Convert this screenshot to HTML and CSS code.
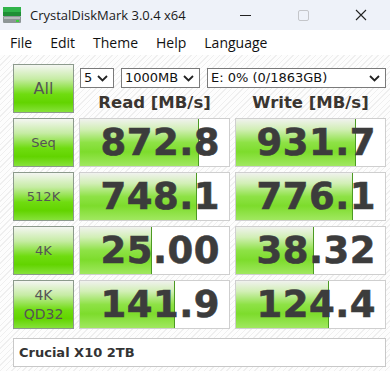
FILE: index.html
```html
<!DOCTYPE html>
<html lang="en">
<head>
    <meta charset="UTF-8">
    <meta name="viewport" content="width=device-width, initial-scale=1.0">
    <title>CrystalDiskMark 3.0.4 x64</title>
    <link rel="stylesheet" href="styles.css">
</head>
<body>
    <div class="window">
        <div class="titlebar">
            <svg class="app-icon" width="20" height="20" viewBox="0 0 20 20">
                <rect x="1" y="2" width="18" height="5" fill="#2fb34a"/>
                <rect x="1" y="7" width="18" height="4" fill="#1e8f35"/>
                <rect x="1" y="11" width="18" height="7" rx="1" fill="#8d9696"/>
                <rect x="2" y="12" width="16" height="2" fill="#b4bcbc"/>
                <rect x="14" y="15" width="3" height="2" fill="#39d13a"/>
            </svg>
            <span class="title">CrystalDiskMark 3.0.4 x64</span>
            <div class="controls">
                <span class="ctl ctl-min"></span>
                <span class="ctl ctl-max"></span>
                <span class="ctl ctl-close">
                    <svg width="12" height="12" viewBox="0 0 12 12"><path d="M1 1L11 11M11 1L1 11" stroke="#222" stroke-width="1.1"/></svg>
                </span>
            </div>
        </div>

        <div class="menubar">
            <span>File</span>
            <span>Edit</span>
            <span>Theme</span>
            <span>Help</span>
            <span>Language</span>
        </div>

        <div class="main">
            <div class="bench">
                <div class="btn btn-all">All</div>
                <div class="top">
                    <div class="selects">
                        <div class="select sel-count">5<svg class="chev" width="11" height="7" viewBox="0 0 11 7"><path d="M1 1L5.5 5.5L10 1" fill="none" stroke="#222" stroke-width="1.8"/></svg></div>
                        <div class="select sel-size">1000MB<svg class="chev" width="11" height="7" viewBox="0 0 11 7"><path d="M1 1L5.5 5.5L10 1" fill="none" stroke="#222" stroke-width="1.8"/></svg></div>
                        <div class="select sel-drive">E: 0% (0/1863GB)<svg class="chev" width="11" height="7" viewBox="0 0 11 7"><path d="M1 1L5.5 5.5L10 1" fill="none" stroke="#222" stroke-width="1.8"/></svg></div>
                    </div>
                    <div class="heads">
                        <div class="head">Read [MB/s]</div>
                        <div class="head">Write [MB/s]</div>
                    </div>
                </div>

                <div class="btn">Seq</div>
                <div class="cell"><div class="bar" style="width: 118px"></div><span class="val">872.8</span></div>
                <div class="cell"><div class="bar" style="width: 119px"></div><span class="val">931.7</span></div>

                <div class="btn">512K</div>
                <div class="cell"><div class="bar" style="width: 116px"></div><span class="val">748.1</span></div>
                <div class="cell"><div class="bar" style="width: 116px"></div><span class="val">776.1</span></div>

                <div class="btn">4K</div>
                <div class="cell"><div class="bar" style="width: 71px"></div><span class="val">25.00</span></div>
                <div class="cell"><div class="bar" style="width: 77px"></div><span class="val">38.32</span></div>

                <div class="btn btn-two">4K<br>QD32</div>
                <div class="cell"><div class="bar" style="width: 94px"></div><span class="val">141.9</span></div>
                <div class="cell"><div class="bar" style="width: 92px"></div><span class="val">124.4</span></div>
            </div>

            <div class="comment">Crucial X10 2TB</div>
        </div>
    </div>
</body>
</html>
```

FILE: styles.css
```css
:root {
    --text: #3c3c3c;
    --label: #555555;
    --cell-border: #cfcfcf;
    --btn-border: #8c9a8c;
}

body {
    margin: 0;
    font-family: "DejaVu Sans", Verdana, sans-serif;
    color: var(--text);
}

.window {
    width: 390px;
    height: 371px;
    overflow: hidden;
}

/* title bar */
.titlebar {
    height: 30px;
    background: #eef2f9;
    display: flex;
    align-items: center;
    padding-left: 2px;
}

.app-icon {
    margin-right: 8px;
}

.title {
    font-family: "Open Sans", "Noto Sans", sans-serif;
    font-size: 13px;
    color: #1a1a1a;
}

.controls {
    margin-left: auto;
    display: flex;
    height: 30px;
}

.ctl {
    width: 58px;
    display: flex;
    align-items: center;
    justify-content: center;
}

.ctl-min::before {
    content: "";
    width: 11px;
    height: 1px;
    background: #222;
}

.ctl-max::before {
    content: "";
    width: 9px;
    height: 9px;
    border: 1px solid #c4c6ca;
    border-radius: 2px;
}

/* menu */
.menubar {
    height: 25px;
    background: #ffffff;
    display: flex;
    align-items: center;
    font-family: "Open Sans", "Noto Sans", sans-serif;
    font-size: 14px;
    color: #111;
    padding-left: 10px;
}

.menubar span {
    margin-right: 18px;
}

/* main area */
.main {
    height: 316px;
    box-sizing: border-box;
    padding: 9px 4px 0 13px;
    background-color: #fdfdfd;
    background-image: repeating-linear-gradient(135deg, #fdfdfd 0 3px, #efefef 3px 4px);
}

.bench {
    display: grid;
    grid-template-columns: 61px 151px 151px;
    grid-auto-rows: 49px;
    column-gap: 5px;
    row-gap: 5px;
}

.top {
    grid-column: 2 / 4;
    display: flex;
    flex-direction: column;
}

.selects {
    display: flex;
    gap: 7px;
    padding-top: 4px;
    padding-left: 1px;
}

.select {
    height: 20px;
    box-sizing: border-box;
    border: 1px solid #7a7a7a;
    background: #fff;
    font-size: 13px;
    line-height: 18px;
    padding-left: 3px;
    color: #111;
    display: flex;
    align-items: center;
    position: relative;
}

.sel-count { width: 34px; }
.sel-size { width: 79px; }
.sel-drive { width: 179px; }

.chev {
    position: absolute;
    right: 5px;
    top: 6px;
}

.heads {
    display: flex;
    gap: 5px;
    margin-top: 5px;
}

.head {
    width: 151px;
    text-align: center;
    font-weight: bold;
    font-size: 16.5px;
    line-height: 20px;
    color: #3a3530;
}

/* green buttons */
.btn {
    box-sizing: border-box;
    border: 1px solid var(--btn-border);
    background: linear-gradient(to bottom, #f4f6f2 0%, #c6eca4 30%, #6fdc10 62%, #62d400 80%, #86e23a 100%);
    display: flex;
    align-items: center;
    justify-content: center;
    text-align: center;
    font-size: 13px;
    color: var(--label);
}

.btn-all {
    font-size: 16px;
}

.btn-two {
    line-height: 19px;
    font-size: 14px;
}

/* result cells */
.cell {
    box-sizing: border-box;
    border: 1px solid var(--cell-border);
    background: #ffffff;
    position: relative;
    display: flex;
    align-items: center;
    justify-content: flex-end;
    padding-right: 9px;
}

.bar {
    position: absolute;
    left: 0;
    top: 0;
    bottom: 0;
    background: linear-gradient(to bottom, #f0f2ee 0%, #d2efb6 22%, #8ee246 50%, #7ddc2c 70%, #a0e860 100%);
    border-right: 1px solid #4c9a22;
}

.val {
    position: relative;
    font-size: 37px;
    font-weight: bold;
    color: var(--text);
    letter-spacing: 0.5px;
    -webkit-text-stroke: 0.6px var(--text);
}

/* comment box */
.comment {
    margin-top: 9px;
    width: 373px;
    height: 29px;
    box-sizing: border-box;
    border: 1px solid #c8c8c8;
    background: #fff;
    font-size: 13px;
    font-weight: bold;
    display: flex;
    align-items: center;
    padding-left: 5px;
    color: #333;
}
```
